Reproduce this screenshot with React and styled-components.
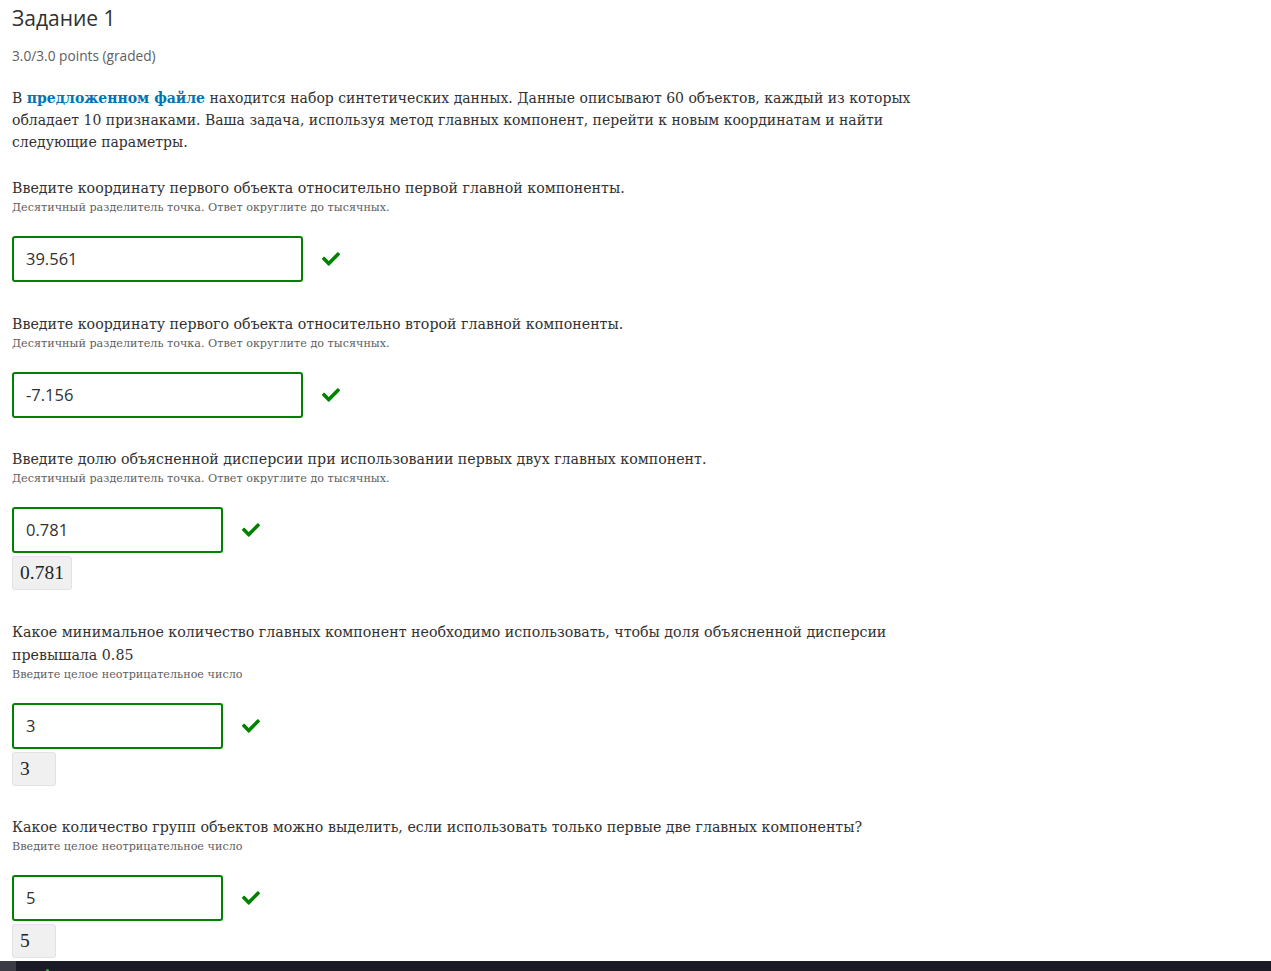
import React from 'react';
import styled, { createGlobalStyle } from 'styled-components';
import { FaCheck } from 'react-icons/fa';

const GlobalStyle = createGlobalStyle`
  body {
    margin: 0;
    background: #fff;
    font-family: "DejaVu Serif", serif;
    color: #313131;
  }
`;

const questions = [
  {
    label: 'Введите координату первого объекта относительно первой главной компоненты.',
    hint: 'Десятичный разделитель точка. Ответ округлите до тысячных.',
    value: '39.561',
    wide: true,
  },
  {
    label: 'Введите координату первого объекта относительно второй главной компоненты.',
    hint: 'Десятичный разделитель точка. Ответ округлите до тысячных.',
    value: '-7.156',
    wide: true,
  },
  {
    label: 'Введите долю объясненной дисперсии при использовании первых двух главных компонент.',
    hint: 'Десятичный разделитель точка. Ответ округлите до тысячных.',
    value: '0.781',
    preview: '0.781',
  },
  {
    label: 'Какое минимальное количество главных компонент необходимо использовать, чтобы доля объясненной дисперсии превышала 0.85',
    hint: 'Введите целое неотрицательное число',
    value: '3',
    preview: '3',
  },
  {
    label: 'Какое количество групп объектов можно выделить, если использовать только первые две главных компоненты?',
    hint: 'Введите целое неотрицательное число',
    value: '5',
    preview: '5',
  },
];

const App = () => {
  return (
    <>
      <GlobalStyle />
      <Page>
        <Title>Задание 1</Title>
        <Points>3.0/3.0 points (graded)</Points>
        <Intro>
          В <IntroLink href="#">предложенном файле</IntroLink> находится набор синтетических данных. Данные описывают 60 объектов, каждый из которых обладает 10 признаками. Ваша задача, используя метод главных компонент, перейти к новым координатам и найти следующие параметры.
        </Intro>

        {questions.map((q, i) => (
          <Question key={i}>
            <Label>{q.label}</Label>
            <Hint>{q.hint}</Hint>
            <AnswerRow>
              <AnswerInput $wide={q.wide} defaultValue={q.value} readOnly />
              <CheckMark>
                <FaCheck />
              </CheckMark>
            </AnswerRow>
            {q.preview && <Preview>{q.preview}</Preview>}
          </Question>
        ))}
      </Page>
      <Footer>
        <FooterEdge />
        <FooterDot />
      </Footer>
    </>
  );
};

// Styled Components
const Page = styled.div`
  width: 900px;
  padding: 5px 0 0 12px;
`;

const Title = styled.h2`
  margin: 0;
  font-family: "Open Sans", sans-serif;
  font-size: 21px;
  font-weight: 400;
  line-height: 26px;
  color: #313131;
`;

const Points = styled.div`
  margin-top: 16px;
  font-family: "Open Sans", sans-serif;
  font-size: 13.7px;
  line-height: 18px;
  color: #5e5e5e;
`;

const Intro = styled.p`
  margin: 22px 0 0;
  font-size: 14px;
  line-height: 22px;
  color: #313131;
`;

const IntroLink = styled.a`
  color: #0075b4;
  font-weight: 700;
  text-decoration: none;
`;

const Question = styled.div`
  margin-top: 24px;

  & + & {
    margin-top: 30.5px;
  }
`;

const Label = styled.div`
  font-size: 14.2px;
  line-height: 23px;
  color: #313131;
`;

const Hint = styled.div`
  font-size: 11.2px;
  line-height: 16px;
  color: #5e5e5e;
`;

const AnswerRow = styled.div`
  display: flex;
  align-items: center;
  gap: 19px;
  margin-top: 20px;
`;

const AnswerInput = styled.input`
  box-sizing: border-box;
  width: ${(p) => (p.$wide ? '291px' : '211px')};
  height: 46px;
  padding: 0 12px 1px;
  border: 2px solid #008100;
  border-radius: 3px;
  font-family: "Open Sans", sans-serif;
  font-size: 16.5px;
  color: #313131;
  background: #fff;
  outline: none;
`;

const CheckMark = styled.span`
  display: flex;
  align-items: center;
  color: #008100;
  font-size: 18px;
`;

const Preview = styled.div`
  box-sizing: border-box;
  display: inline-block;
  min-width: 44px;
  height: 34px;
  margin-top: 3px;
  padding: 0 7px;
  background: #f0f0f0;
  border: 1px solid #e2e2e2;
  border-radius: 3px;
  font-family: "Liberation Serif", serif;
  font-size: 19.5px;
  line-height: 32px;
  color: #222;
`;

const Footer = styled.div`
  position: relative;
  display: flex;
  height: 40px;
  margin-top: 3px;
  background: #1b1b28;
`;

const FooterEdge = styled.div`
  width: 16px;
  background: #3b3b45;
`;

const FooterDot = styled.div`
  position: absolute;
  left: 46px;
  top: 8px;
  width: 3px;
  height: 3px;
  border-radius: 50%;
  background: #2db34a;
`;

export default App;
